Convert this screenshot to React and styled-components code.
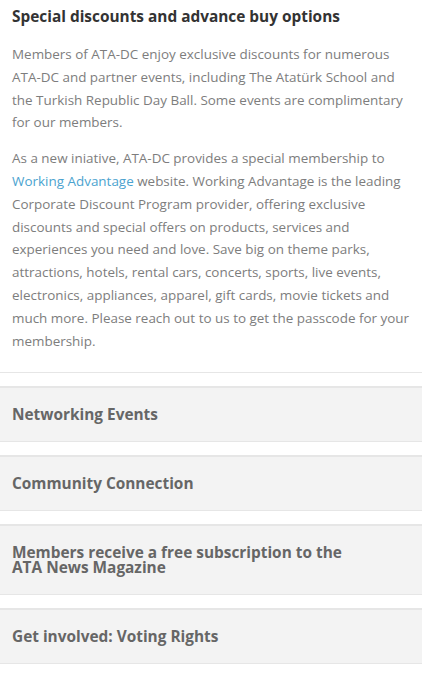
import React from "react";
import styled, { createGlobalStyle } from "styled-components";

const Global = createGlobalStyle`
  html, body { margin: 0; padding: 0; background: #fff; }
  body { font-family: "Open Sans", "Noto Sans", sans-serif; -webkit-font-smoothing: antialiased; }
`;

const Page = styled.div`
  width: 422px;
  display: flex;
  flex-direction: column;
`;

const Section = styled.section`
  padding: 6px 12px 0;
`;

const Title = styled.h2`
  margin: 0 0 15px;
  font-size: 15.4px;
  line-height: 22px;
  font-weight: 700;
  color: #333;
`;

const Para = styled.p`
  margin: 0 0 13px;
  font-size: 13.45px;
  line-height: 22.8px;
  color: #7d7d7d;
  &:last-child { margin-bottom: 0; }
`;

const Link = styled.a`
  color: #4ba3cf;
  text-decoration: none;
`;

const Divider = styled.hr`
  margin: 20px 0 13px;
  border: 0;
  border-top: 1px solid #e6e6e6;
  height: 0;
`;

const Panels = styled.div`
  display: flex;
  flex-direction: column;
  gap: 13px;
`;

const Panel = styled.div`
  background: #f3f3f3;
  border-top: 2px solid #e6e6e6;
  border-bottom: 1px solid #e6e6e6;
  padding: 19px 60px 19px 12px;
`;

const PanelTitle = styled.h3`
  margin: 0;
  font-size: 15.4px;
  line-height: 15px;
  font-weight: 700;
  color: #666;
`;

const items = [
  "Networking Events",
  "Community Connection",
  "Members receive a free subscription to the ATA News Magazine",
  "Get involved: Voting Rights",
];

export default function App() {
  return (
    <Page>
      <Global />
      <Section>
        <Title>Special discounts and advance buy options</Title>
        <Para>
          Members of ATA-DC enjoy exclusive discounts for numerous ATA-DC and
          partner events, including The Atatürk School and the Turkish Republic
          Day Ball. Some events are complimentary for our members.
        </Para>
        <Para>
          As a new iniative, ATA-DC provides a special membership to{" "}
          <Link href="#">Working Advantage</Link> website. Working Advantage is
          the leading Corporate Discount Program provider, offering exclusive
          discounts and special offers on products, services and experiences you
          need and love. Save big on theme parks, attractions, hotels, rental
          cars, concerts, sports, live events, electronics, appliances, apparel,
          gift cards, movie tickets and much more. Please reach out to us to get
          the passcode for your membership.
        </Para>
      </Section>
      <Divider />
      <Panels>
        {items.map((t) => (
          <Panel key={t}>
            <PanelTitle>{t}</PanelTitle>
          </Panel>
        ))}
      </Panels>
    </Page>
  );
}
